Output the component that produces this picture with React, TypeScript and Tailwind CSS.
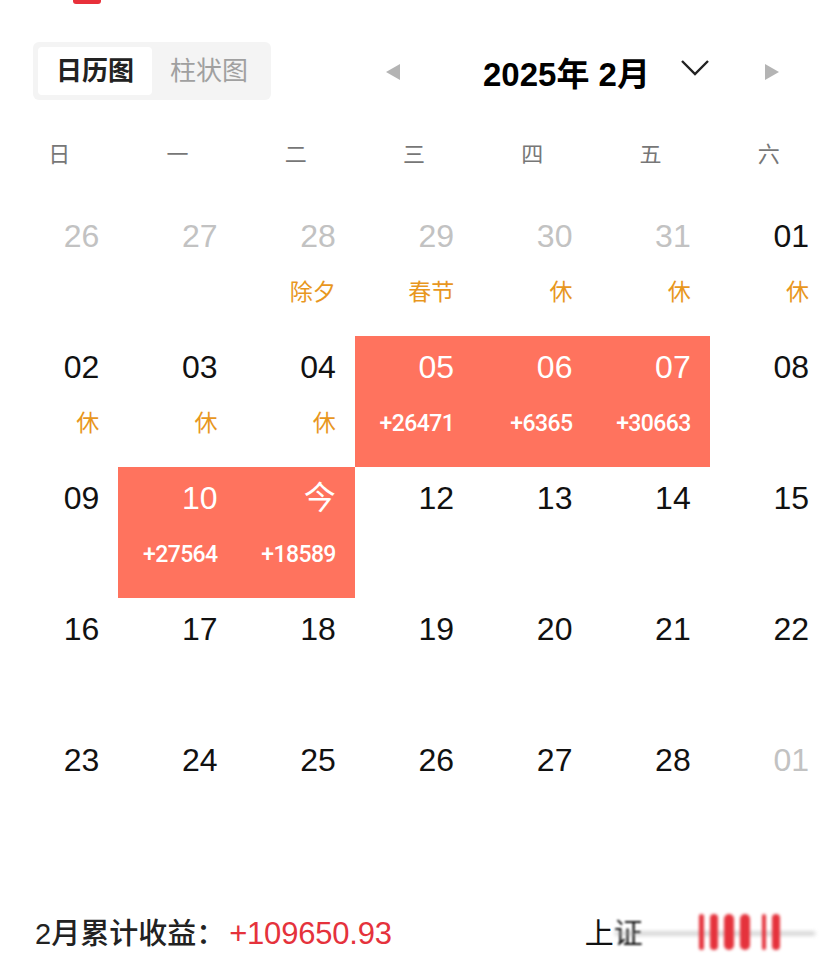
type Day = {
  n: string;
  muted?: boolean;
  label?: string;
  gain?: string;
  hot?: boolean;
};

const WEEK = ["日", "一", "二", "三", "四", "五", "六"];

const ROWS: Day[][] = [
  [
    { n: "26", muted: true },
    { n: "27", muted: true },
    { n: "28", muted: true, label: "除夕" },
    { n: "29", muted: true, label: "春节" },
    { n: "30", muted: true, label: "休" },
    { n: "31", muted: true, label: "休" },
    { n: "01", label: "休" },
  ],
  [
    { n: "02", label: "休" },
    { n: "03", label: "休" },
    { n: "04", label: "休" },
    { n: "05", hot: true, gain: "+26471" },
    { n: "06", hot: true, gain: "+6365" },
    { n: "07", hot: true, gain: "+30663" },
    { n: "08" },
  ],
  [
    { n: "09" },
    { n: "10", hot: true, gain: "+27564" },
    { n: "今", hot: true, gain: "+18589" },
    { n: "12" },
    { n: "13" },
    { n: "14" },
    { n: "15" },
  ],
  [
    { n: "16" },
    { n: "17" },
    { n: "18" },
    { n: "19" },
    { n: "20" },
    { n: "21" },
    { n: "22" },
  ],
  [
    { n: "23" },
    { n: "24" },
    { n: "25" },
    { n: "26" },
    { n: "27" },
    { n: "28" },
    { n: "01", muted: true },
  ],
];

const FONT = "font-['Liberation_Sans','Noto_Sans_CJK_SC',sans-serif]";

function Cell({ d }: { d: Day }) {
  const numColor = d.hot ? "text-white" : d.muted ? "text-[#c2c2c2]" : "text-[#111]";
  return (
    <div
      className={`flex h-[131px] flex-col items-end pr-[19px] ${d.hot ? "bg-[#ff735e]" : ""}`}
    >
      <div className={`mt-[13px] h-[36px] text-[32px] leading-[36px] ${numColor}`}>{d.n}</div>
      {d.label && (
        <div className="mt-[23px] text-[23px] leading-[30px] text-[#e8971e]">{d.label}</div>
      )}
      {d.gain && (
        <div className="mt-[24px] font-['Roboto',sans-serif] text-[23px] font-medium leading-[30px] tracking-[-0.6px] text-white">
          {d.gain}
        </div>
      )}
    </div>
  );
}

export default function App() {
  return (
    <div className={`relative h-[953px] w-[828px] overflow-hidden bg-white ${FONT}`}>
      {/* cut-off red tab at the top */}
      <div className="h-[42px] pl-[73px]">
        <div className="h-[4px] w-[28px] rounded-b-[3px] bg-[#e8303a]" />
      </div>

      {/* header */}
      <div className="flex h-[58px] items-center">
        <div className="ml-[33px] flex h-[58px] w-[238px] items-center rounded-[6px] bg-[#f4f4f4] p-[5px]">
          <div className="flex h-full w-[114px] items-center justify-center rounded-[4px] bg-white text-[26px] font-bold text-[#222]">
            日历图
          </div>
          <div className="flex h-full flex-1 items-center justify-center text-[26px] text-[#a0a0a0]">
            柱状图
          </div>
        </div>
        <div className="ml-[114px] flex items-center">
          <svg width="16" height="18" viewBox="0 0 16 18" className="mt-[2px]">
            <path d="M15 1 L1 9 L15 17 Z" fill="#b4b4b4" />
          </svg>
        </div>
        <div className="ml-[82px] mt-[6px] text-[33px] font-bold leading-none text-black">
          2025年 2月
        </div>
        <svg width="30" height="18" viewBox="0 0 30 18" className="ml-[30px] mt-[-6px]">
          <path d="M2 2 L15 15 L28 2" fill="none" stroke="#222" strokeWidth="2.4" />
        </svg>
        <div className="ml-[54px] flex items-center">
          <svg width="16" height="18" viewBox="0 0 16 18" className="mt-[2px]">
            <path d="M1 1 L15 9 L1 17 Z" fill="#b4b4b4" />
          </svg>
        </div>
      </div>

      {/* weekday header */}
      <div className="grid h-[105px] grid-cols-7 items-center pt-[4px]">
        {WEEK.map((w) => (
          <div key={w} className="text-center text-[22px] text-[#777]">
            {w}
          </div>
        ))}
      </div>

      {/* calendar grid */}
      <div className="grid grid-cols-7">
        {ROWS.flat().map((d, i) => (
          <Cell key={i} d={d} />
        ))}
      </div>

      {/* summary */}
      <div className="mt-[58px] flex items-center pl-[35px]">
        <div className="text-[29px] font-medium leading-[32px] text-[#222]">2月累计收益：</div>
        <div className="ml-[4px] text-[31px] leading-[32px] tracking-[-0.2px] text-[#e5323c]">+109650.93</div>
        <div className="relative ml-[193px] flex items-center">
          <span className="text-[29px] leading-[32px] text-[#111]">上</span>
          <span className="text-[29px] leading-[32px] text-[#111] blur-[1px]">证</span>
          <div className="absolute left-[30px] top-[14px] h-[3px] w-[200px] bg-[#999] opacity-60 blur-[2px]" />
          <div className="absolute left-[114px] top-[-4px] flex gap-[6px] blur-[1.5px]">
            <div className="h-[36px] w-[5px] rounded-full bg-[#e5323c]" />
            <div className="h-[36px] w-[8px] rounded-full bg-[#e5323c]" />
            <div className="h-[36px] w-[10px] rounded-full bg-[#e5323c]" />
            <div className="h-[36px] w-[10px] rounded-full bg-[#e5323c]" />
            <div className="ml-[6px] h-[36px] w-[4px] rounded-full bg-[#e5323c]" />
            <div className="h-[36px] w-[8px] rounded-full bg-[#e5323c]" />
          </div>
        </div>
      </div>
    </div>
  );
}
